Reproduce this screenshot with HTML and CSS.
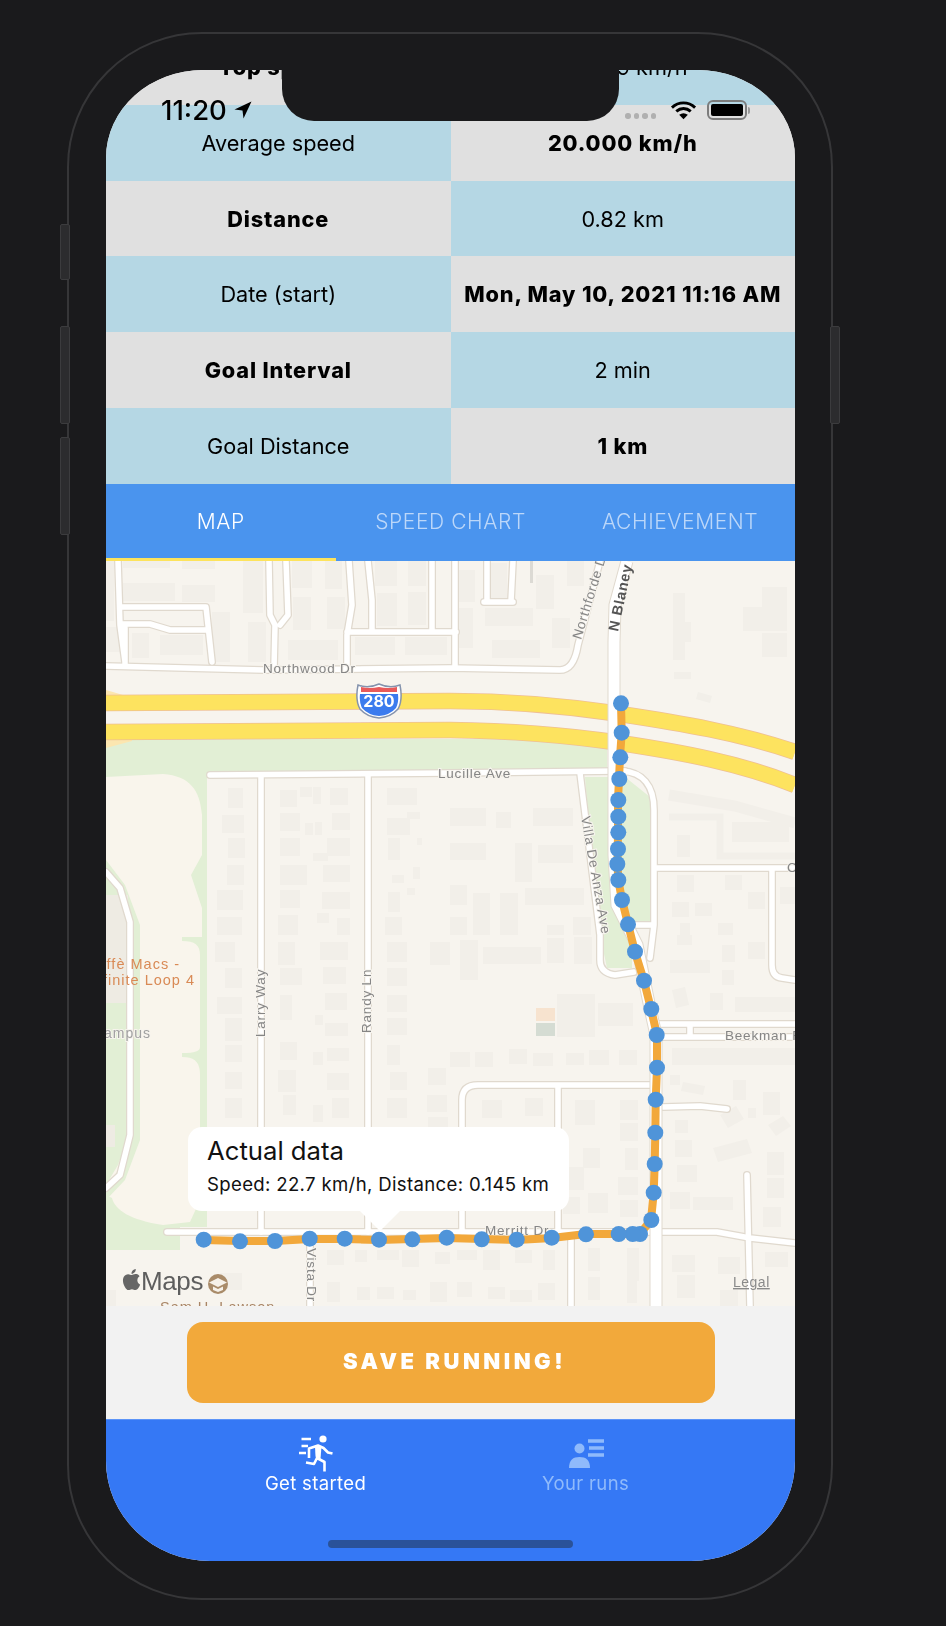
FILE: index.html
```html
<!DOCTYPE html>
<html lang="en">
<head>
<meta charset="utf-8">
<title>Run summary</title>
<link rel="stylesheet" href="styles.css">
</head>
<body>
<div class="phone">
  <span class="side side-a"></span>
  <span class="side side-b"></span>
  <span class="side side-c"></span>
  <span class="side side-r"></span>
  <div class="screen">
    <div class="stats">
      <div class="cell gray strong">Top speed</div><div class="cell blue">29.339 km/h</div>
      <div class="cell blue">Average speed</div><div class="cell gray strong">20.000 km/h</div>
      <div class="cell gray strong">Distance</div><div class="cell blue">0.82 km</div>
      <div class="cell blue">Date (start)</div><div class="cell gray strong">Mon, May 10, 2021 11:16 AM</div>
      <div class="cell gray strong">Goal Interval</div><div class="cell blue">2 min</div>
      <div class="cell blue">Goal Distance</div><div class="cell gray strong">1 km</div>
    </div>
    <div class="tabs">
      <div class="tab active">MAP</div>
      <div class="tab">SPEED CHART</div>
      <div class="tab">ACHIEVEMENT</div>
    </div>
    <div class="map">
      <svg class="map-svg" viewBox="106 561 689 745" xmlns="http://www.w3.org/2000/svg">
        <rect class="m-bg" x="106" y="561" width="689" height="745"/>
        <path class="m-green" d="M106 739H607V772H207V937H207V1053H207V1227H180V1250H106Z"/>
        <path class="m-cream" d="M106 777L163 774C190 776 200 790 202 815V855L191 875L202 908V937H182V941C195 941 200 945 200 955V1047C200 1051 195 1053 182 1053V1057C195 1057 200 1062 200 1075V1200L190 1222L163 1225C130 1220 115 1210 112 1198L106 1195V1185L133 1135V935L125 900L106 870Z"/>
        <path class="m-green" d="M106 860L125 885L140 925V1140L125 1180L106 1200V1190L118 1170L128 1135V935L120 900L106 880Z"/>
        <path class="m-build-dark" d="M106 895H128V1003H106Z"/>
        <path class="m-green" d="M106 1003H127V1135L118 1165L106 1185Z"/>
        <rect class="m-build-dark" x="106" y="1125" width="9" height="22"/>
        <path class="m-green" d="M585 777H625L650 797V921H632V968H607L600 935L590 840Z"/>
        <path class="m-ramp" d="M106 690L130 697V708H106ZM106 748V728H132V741Z"/>

        <path class="m-bld" d="M106 561h8v60h-8zM123 561h47v7h-47zM182 561h33v8h-33zM123 583h52v18h-52zM182 585h33v17h-33zM212 612h18v50h-18zM132 633h17v25h-17zM160 635h43v20h-43zM243 561h20v52h-20zM248 622h18v40h-18zM292 561h20v27h-20zM293 597h18v33h-18zM325 561h17v28h-17zM327 597h18v32h-18zM288 640h50v20h-50zM375 561h22v25h-22zM377 593h20v33h-20zM408 561h18v25h-18zM408 592h18v33h-18zM355 637h40v18h-40zM405 637h42v18h-42zM106 627h15v25h-15zM455 570h20v32h-20zM487 563h20v38h-20zM536 575h18v34h-18zM455 608h18v40h-18zM485 608h48v18h-48zM492 640h48v18h-48zM552 618h18v30h-18zM567 561h17v25h-17zM673 593h12v67h-12zM685 622h6v20h-6zM743 607h44v24h-44zM762 587h25v20h-25zM762 633h25v24h-25zM674 672h17v7h-17zM698 692l14 4-2 7-14-4z"/>
        <path class="m-bld" d="M450 808h36v18h-36zM496 812h15v16h-15zM533 808h40v18h-40zM450 843h36v17h-36zM515 843h17v39h-17zM538 845h35v18h-35zM450 885h17v20h-17zM473 893h17v42h-17zM500 893h18v42h-18zM525 888h59v17h-59zM450 917h17v18h-17zM547 925h17v10h-17zM573 917h18v18h-18zM677 835h13v22h-13zM732 822h57v20h-57zM677 875h17v17h-17zM725 875h17v15h-17zM672 902h17v15h-17zM695 903h17v13h-17zM748 892h17v17h-17zM780 887h15v17h-15zM680 923h10v12h-10zM718 923h15v12h-15z"/>
        <path class="m-bld" d="M228 788h15v20h-15zM222 815h22v18h-22zM228 838h17v20h-17zM227 865h17v20h-17zM217 890h26v20h-26zM217 917h25v18h-25zM215 942h20v20h-20zM225 968h17v20h-17zM217 997h25v17h-25zM225 1018h17v23h-17zM225 1045h17v17h-17zM225 1072h17v17h-17zM225 1098h17v20h-17zM280 790h17v17h-17zM300 787h12v10h-12zM313 787h8v17h-8zM330 788h18v17h-18zM280 813h20v18h-20zM305 823h8v12h-8zM315 822h7v13h-7zM332 813h18v17h-18zM280 838h20v18h-20zM327 838h23v18h-23zM313 853h15v8h-15zM280 865h27v20h-27zM323 865h27v17h-27zM280 890h20v18h-20zM322 892h28v17h-28zM278 915h20v20h-20zM317 913h12v10h-12zM337 918h13v17h-13zM278 942h17v23h-17zM323 967h23v17h-23zM280 968h22v17h-22zM280 995h12v25h-12zM325 993h22v17h-22zM315 1015h8v10h-8zM280 1042h17v18h-17zM325 1023h23v13h-23zM313 1052h10v13h-10zM327 1048h22v13h-22zM278 1070h18v22h-18zM327 1073h22v17h-22zM283 1095h13v20h-13zM332 1098h17v20h-17zM313 1105h10v17h-10zM320 942h28v18h-28z"/>
        <path class="m-bld" d="M387 788h30v17h-30zM407 812h13v7h-13zM387 818h23v17h-23zM388 838h12v22h-12zM417 838h5v7h-5zM392 875h12v8h-12zM413 867h7v12h-7zM407 888h8v7h-8zM388 892h12v20h-12zM385 917h17v18h-17zM387 942h20v20h-20zM387 968h20v18h-20zM387 995h20v17h-20zM387 1018h20v17h-20zM387 1045h13v20h-13zM390 1072h17v18h-17zM387 1098h20v20h-20zM430 942h20v23h-20zM428 1068h18v17h-18zM427 1095h20v17h-20zM428 1117h20v10h-20zM460 940h18v40h-18zM483 947h58v17h-58zM547 938h17v25h-17zM574 937h18v27h-18zM557 994h38v43h-38zM598 1003h35v23h-35zM450 1052h20v15h-20zM475 1052h18v15h-18zM509 1049h18v15h-18zM533 1053h20v13h-20zM566 1053h18v12h-18zM589 1050h20v15h-20zM619 1050h18v15h-18z"/>
        <path class="m-bld" d="M482 1100h20v18h-20zM525 1098h18v18h-18zM575 1100h20v25h-20zM620 1100h18v20h-18zM620 1123h18v18h-18zM583 1148h17v20h-17zM625 1148h13v22h-13zM618 1177h20v18h-20zM620 1200h18v17h-18zM588 1193h20v20h-20zM567 1167h17v23h-17zM563 1197h17v17h-17zM670 960h40v13h-40zM722 945h13v17h-13zM722 970h12v15h-12zM672 990l13-3 4 18-13 3zM710 993h13v17h-13zM735 997h60v15h-60zM748 942h17v17h-17zM677 935h15v10h-15zM672 1048h123v17h-123zM670 1075h10v10h-10zM683 1082l22 4-2 9-22-4zM733 1080h13v20h-13zM748 1108h8v10h-8zM720 1115l16-9 8 13-16 9zM763 1092h17v23h-17zM768 1125l15-9 8 10-15 10zM675 1120h13v13h-13zM675 1140h17v17h-17zM713 1148l34-9 5 14-34 9zM677 1165h20v17h-20zM670 1192h20v17h-20zM693 1197h40v13h-40zM767 1152h17v23h-17zM767 1178h17v20h-17zM763 1207h18v20h-18z"/>
        <path class="m-bld" d="M457 1250h20v10h-20zM483 1250h17v20h-17zM515 1250h17v13h-17zM543 1250h12v20h-12zM588 1248h12v23h-12zM627 1248h12v33h-12zM672 1255h23v17h-23zM718 1257h22v17h-22zM765 1252h23v15h-23zM457 1282h15v15h-15zM488 1287h17v12h-17zM510 1290h22v12h-22zM538 1283h17v17h-17zM588 1277h12v23h-12zM627 1273h10v30h-10zM677 1275h18v23h-18zM720 1290h18v16h-18zM327 1250h17v15h-17zM355 1250h12v12h-12zM377 1250h22v10h-22zM402 1250h17v17h-17zM435 1252h15v12h-15zM327 1282h13v20h-13zM357 1287h13v13h-13zM377 1287h17v12h-17zM403 1290h13v10h-13zM430 1282h17v20h-17zM220 1273h22v17h-22zM106 1290h10v16h-10z"/>
        <path class="m-bld-line" d="M669 795L735 806L795 823"/>
        <path class="m-bld-thin" d="M669 817H720V856H795"/>
        <rect class="m-soft-a" x="536" y="1008" width="19" height="13"/>
        <rect class="m-soft-b" x="536" y="1023" width="19" height="13"/>

        <path class="m-hw-c" d="M106 703L450 701C520 701 580 708 620 714C680 723 740 733 795 752"/>
        <path class="m-hw-c" d="M106 732L450 730C530 731 580 737 620 743C680 752 740 763 795 785"/>
        <path class="m-hw" d="M106 703L450 701C520 701 580 708 620 714C680 723 740 733 795 752"/>
        <path class="m-hw" d="M106 732L450 730C530 731 580 737 620 743C680 752 740 763 795 785"/>

        <g class="m-casing">
          <use href="#roads"/>
        </g>
        <g class="m-white">
          <g id="roads">
            <path d="M118 561L120 625L125 662M120 624H150L170 630H208M122 607H206L212 662M125 628V664"/>
            <path d="M106 666L263 670L450 668L560 670Q574 670 578 645L600 561"/>
            <path d="M269 561L270 615L275 625L274 668M286 561L288 615L280 625"/>
            <path d="M349 561L352 605L347 635V668M368 561L372 600V632M347 632H456M432 561V632M455 561V668"/>
            <path d="M487 561V601M513 561L511 601M484 602H513"/>
            <path d="M210 775L450 773L625 771"/>
            <path d="M261 775V1232M368 775V1232"/>
            <path d="M106 872L120 888L130 922V1135L120 1175L106 1188"/>
            <path d="M167 1232H657H717L750 1238L795 1243"/>
            <path d="M580 773L588 838L600 935V960Q600 973 615 975L634 972"/>
            <path d="M622 771C642 772 654 785 654 810V925L650 958M635 925H654"/>
            <path d="M657 868H795M772 868V965Q772 977 782 978L795 980"/>
            <path d="M657 1024H795M657 1037H795M690 1024V1037"/>
            <path d="M650 1085H478Q462 1085 462 1100V1232M558 1085V1232"/>
            <path d="M663 1107L700 1106L727 1109M747 1175L750 1306M571 1240V1306M310 1240V1306"/>
          </g>
        </g>
        <path class="r-main-c" d="M627 561L615 605L614 642V855L617 905L637 945L650 1008L656 1035V1306"/>
        <path class="r-main" d="M627 561L615 605L614 642V855L617 905L637 945L650 1008L656 1035V1306"/>
        <rect class="m-thin" x="530" y="561" width="3" height="22"/>

        <g class="m-shield">
          <path class="sh-out" d="M358 685Q368 689 379 684Q390 689 400 685Q403 700 398 709Q391 717 379 718Q367 717 360 709Q355 700 358 685Z"/>
          <path class="sh-blue" d="M360 694H398Q399 702 396 708Q390 715 379 716Q368 715 362 708Q359 702 360 694Z"/>
          <path class="sh-red" d="M361 687Q370 689 379 687Q388 689 397 687V692H361Z"/>
          <text class="sh-text" x="379" y="707">280</text>
        </g>

        <g class="m-labels">
          <text x="263" y="673">Northwood Dr</text>
          <text x="438" y="778">Lucille Ave</text>
          <text transform="translate(581 640) rotate(-73)">Northforde Dr</text>
          <text class="lbl-strong" transform="translate(618 632) rotate(-78)">N Blaney</text>
          <text transform="translate(581 817) rotate(80)">Villa De Anza Ave</text>
          <text transform="translate(265 1037) rotate(-90)">Larry Way</text>
          <text transform="translate(371 1033) rotate(-90)">Randy Ln</text>
          <text transform="translate(307 1248) rotate(90)">Vista Dr</text>
          <text x="485" y="1235">Merritt Dr</text>
          <text x="725" y="1040">Beekman Rd</text>
          <text x="787" y="872">Cupertino</text>
          <text class="lbl-anchor-end" x="151" y="1038">Campus</text>
          <text class="lbl-ring" x="103" y="875">Loop</text>
          <text class="lbl-poi" x="180" y="969">Caffè Macs -</text>
          <text class="lbl-poi" x="195" y="985">Infinite Loop 4</text>
          <text class="lbl-school" x="160" y="1312">Sam H. Lawson</text>
        </g>

        <path class="route" d="M621 703L621.700 733L620 757L619 779L618 800V832L617.500 864L618.300 880L622 900L628 924L635 952L644 981L651 1009L657 1035V1068L655.700 1100L655.300 1133L654.700 1164L653.700 1193L651 1220L640 1234H619L586 1234L552 1238L517 1240L482 1239L447 1238L412 1239L379 1240L345 1239L310 1239L275 1241L240 1241L204 1240"/>
        <g class="dots">
          <circle cx="621" cy="703.3" r="8"/><circle cx="621.7" cy="732.7" r="8"/><circle cx="620.3" cy="757.3" r="8"/><circle cx="619.3" cy="779" r="8"/><circle cx="618.3" cy="800" r="8"/><circle cx="618.3" cy="816.7" r="8"/><circle cx="618.3" cy="832.3" r="8"/><circle cx="618" cy="849" r="8"/><circle cx="617.3" cy="864" r="8"/><circle cx="618.3" cy="880" r="8"/><circle cx="622" cy="900" r="8"/><circle cx="628" cy="924.3" r="8"/><circle cx="635" cy="951.7" r="8"/><circle cx="644" cy="980.7" r="8"/><circle cx="651.3" cy="1009" r="8"/><circle cx="656.7" cy="1035" r="8"/><circle cx="657" cy="1067.7" r="8"/><circle cx="655.7" cy="1099.7" r="8"/><circle cx="655.3" cy="1132.7" r="8"/><circle cx="654.7" cy="1164" r="8"/><circle cx="653.7" cy="1192.7" r="8"/><circle cx="651.3" cy="1220" r="8"/><circle cx="640" cy="1234" r="8"/><circle cx="632.7" cy="1234" r="8"/><circle cx="618.7" cy="1234" r="8"/><circle cx="586" cy="1234.3" r="8"/><circle cx="551.7" cy="1237.7" r="8"/><circle cx="516.7" cy="1239.7" r="8"/><circle cx="481.7" cy="1239.3" r="8"/><circle cx="446.7" cy="1237.7" r="8"/><circle cx="412.3" cy="1239.3" r="8"/><circle cx="379" cy="1239.7" r="8"/><circle cx="344.7" cy="1238.7" r="8"/><circle cx="309.7" cy="1238.7" r="8"/><circle cx="275" cy="1241" r="8"/><circle cx="240" cy="1241.3" r="8"/><circle cx="203.7" cy="1239.7" r="8"/>
        </g>

        <g transform="translate(121 1269) scale(.88)">
          <path class="apple" d="M12.152 6.896c-.948 0-2.415-1.078-3.96-1.04-2.04.027-3.91 1.183-4.961 3.014-2.117 3.675-.546 9.103 1.519 12.09 1.013 1.454 2.208 3.09 3.792 3.039 1.52-.065 2.09-.987 3.935-.987 1.831 0 2.35.987 3.96.948 1.637-.026 2.676-1.48 3.676-2.948 1.156-1.688 1.636-3.325 1.662-3.415-.039-.013-3.182-1.221-3.22-4.857-.026-3.04 2.48-4.494 2.597-4.559-1.429-2.09-3.623-2.324-4.39-2.376-2-.156-3.675 1.09-4.61 1.09zM15.53 3.830c.843-1.012 1.4-2.427 1.245-3.830-1.207.052-2.662.805-3.532 1.818-.78.896-1.454 2.338-1.273 3.714 1.338.104 2.715-.688 3.559-1.701"/>
        </g>
        <text class="maps-word" x="141" y="1290">Maps</text>
        <circle class="badge" cx="218" cy="1284" r="10"/>
        <path class="badge-cap" d="M218 1278L227 1282.500L218 1287L209 1282.500ZM213 1286.500L218 1289L223 1286.500V1290L218 1292L213 1290Z"/>
        <text class="legal" x="733" y="1287">Legal</text>
      </svg>
      <div class="callout">
        <div class="callout-title">Actual data</div>
        <div class="callout-text">Speed: 22.7 km/h, Distance: 0.145 km</div>
      </div>
    </div>
    <div class="action">
      <div class="save">SAVE RUNNING!</div>
    </div>
    <nav class="tabbar">
      <div class="nav-item">
        <svg class="nav-icon" viewBox="0 0 36 38" xmlns="http://www.w3.org/2000/svg">
          <circle class="run-head" cx="25" cy="4" r="3.600"/>
          <path class="run-lines" d="M3.500 4H13M3.500 11H10M1 18H8"/>
          <path class="run-body" d="M11 23V13.500L20 10.500L25.500 13L30 17.500L34.500 18.500M20.500 11L19 23L26.500 27V36.500M19 23L16 29L8 27.500"/>
          <path class="run-torso" d="M17 11.500L23.500 11L22.500 24L17.500 21.500Z"/>
        </svg>
        <span>Get started</span>
      </div>
      <div class="nav-item dim">
        <svg class="nav-icon" viewBox="0 0 36 38" xmlns="http://www.w3.org/2000/svg">
          <circle class="runs-head" cx="11.500" cy="13.500" r="5"/>
          <path class="runs-body" d="M1 33C1 25 5 22 11.500 22C18 22 22 25 22 33Z"/>
          <path class="runs-lines" d="M20 6H36M21 13H36M20 20H36"/>
        </svg>
        <span>Your runs</span>
      </div>
      <div class="home-bar"></div>
    </nav>
    <div class="notch"></div>
    <div class="status">
      <div class="status-left">
        <span class="clock">11:20</span>
        <svg class="loc" viewBox="0 0 18 18" xmlns="http://www.w3.org/2000/svg"><path d="M17.500 0.500L0.500 8.500L8.500 9.500L9.500 17.500Z"/></svg>
      </div>
      <div class="status-right">
        <div class="signal"><i></i><i></i><i></i><i></i></div>
        <svg class="wifi" viewBox="0 0 28 20" xmlns="http://www.w3.org/2000/svg">
          <path class="wifi-arc" d="M2 7.500C9 1 19 1 26 7.500M6.500 11.500C11 7.500 17 7.500 21.500 11.500"/>
          <path class="wifi-dot" d="M14 19.500L9.500 15Q14 11.500 18.500 15Z"/>
        </svg>
        <div class="battery"><div class="battery-fill"></div></div>
        <span class="battery-cap"></span>
      </div>
    </div>
  </div>
</div>
</body>
</html>
```

FILE: styles.css
```css
* { box-sizing: border-box; }
html, body { margin: 0; padding: 0; }
body {
  width: 946px;
  height: 1626px;
  background: #1a1a1c;
  overflow: hidden;
  font-family: Inter, "Liberation Sans", sans-serif;
}
.phone {
  position: relative;
  width: 766px;
  height: 1568px;
  margin: 32px 0 0 67px;
  padding: 36px 0 0 37px;
  border: 2px solid #363638;
  border-radius: 135px;
}
.side {
  position: absolute;
  width: 10px;
  background: #2c2c2e;
  border: 1px solid #3c3c3e;
  border-radius: 2px;
}
.side-a { left: -9px; top: 190px; height: 56px; }
.side-b { left: -9px; top: 292px; height: 98px; }
.side-c { left: -9px; top: 403px; height: 98px; }
.side-r { right: -9px; top: 292px; height: 98px; }

.screen {
  position: relative;
  width: 689px;
  height: 1491px;
  border-radius: 97px 97px 104px 104px / 88px 88px 100px 100px;
  overflow: hidden;
  background: #f2f2f2;
  filter: blur(.35px);
}
.stats {
  display: grid;
  grid-template-columns: 344.500px 344.500px;
  grid-auto-rows: 75.830px;
  margin-top: -41px;
  font-size: 21.700px;
  color: #000;
}
.cell { display: flex; align-items: center; justify-content: center; white-space: nowrap; }
.blue { background: #b5d7e4; }
.gray { background: #e0e0e0; }
.strong { font-weight: 800; letter-spacing: .85px; }

.tabs {
  display: grid;
  grid-template-columns: repeat(3, 1fr);
  height: 77px;
  background: #4a94ee;
  font-size: 21px;
  font-weight: 300;
  letter-spacing: .6px;
  color: #bcd7f9;
}
.tab { display: flex; align-items: center; justify-content: center; padding-top: 2px; border-bottom: 3px solid transparent; }
.tab.active { color: #fff; border-bottom-color: #fde35c; }

.map { position: relative; height: 745px; background: #f7f4ee; }
.map-svg { display: block; width: 689px; height: 745px; filter: blur(.4px); }
.m-bg { fill: #f7f4ee; }
.m-green { fill: #e2efd5; }
.m-cream { fill: #f9f5ec; }
.m-ramp { fill: #fce6b0; }
.m-bld { fill: #f2efe9; }
.m-build-dark { fill: #eeebe3; }
.m-bld-line { fill: none; stroke: #f2efe9; stroke-width: 11; }
.m-bld-thin { fill: none; stroke: #f2efe9; stroke-width: 7; }
.m-soft-a { fill: #f7e3cf; }
.m-soft-b { fill: #d5dcd3; }
.m-hw-c { fill: none; stroke: #efbf93; stroke-width: 16.500; }
.m-hw { fill: none; stroke: #fde35f; stroke-width: 15; }
.m-casing path, .m-white path { fill: none; stroke-linecap: round; stroke-linejoin: round; }
.m-casing { stroke: #e0d9ce; stroke-width: 8; }
.m-white { stroke: #fff; stroke-width: 5.500; }
.r-main-c { fill: none; stroke: #e0d9ce; stroke-width: 13; }
.r-main { fill: none; stroke: #fff; stroke-width: 11; }
.m-thin { fill: #dcdad4; }
.sh-out { fill: #fff; stroke: #8593ad; stroke-width: 1.500; }
.sh-blue { fill: #3b7bee; }
.sh-red { fill: #e85a5a; }
.sh-text { fill: #fff; font: 700 16px Inter, sans-serif; text-anchor: middle; }
.m-labels text {
  font: 400 13.500px "Liberation Sans", sans-serif;
  letter-spacing: .8px;
  fill: #858585;
  stroke: #f7f4ee;
  stroke-width: 2px;
  paint-order: stroke;
}
.m-labels .lbl-strong { font-weight: 700; font-size: 14.500px; fill: #555; stroke: none; }
.m-labels .lbl-anchor-end { text-anchor: end; font-size: 14px; letter-spacing: 1px; fill: #a0a0a0; }
.m-labels .lbl-ring { text-anchor: end; font-size: 14px; }
.m-labels .lbl-poi { text-anchor: end; font-size: 14.500px; letter-spacing: 1px; fill: #d98a55; stroke: none; }
.m-labels .lbl-school { font-size: 14.500px; letter-spacing: 1px; fill: #a98566; stroke: none; }
.route { fill: none; stroke: #f2a83b; stroke-width: 8; stroke-linejoin: round; }
.dots circle { fill: #4f94d9; }
.apple { fill: #666; }
.maps-word { font: 400 26px "Liberation Sans", sans-serif; fill: #5e5e5e; letter-spacing: -.4px; }
.badge { fill: #a98b69; }
.badge-cap { fill: #f6f1e9; }
.legal { font: 400 14px "Liberation Sans", sans-serif; letter-spacing: .5px; fill: #8a8a8a; text-decoration: underline; }

.callout {
  position: absolute;
  left: 82px;
  top: 566px;
  width: 381px;
  height: 84px;
  padding: 9px 19px 0;
  background: #fff;
  border-radius: 14px;
  white-space: nowrap;
  color: #111;
}
.callout::after {
  content: "";
  position: absolute;
  left: 172px;
  top: 84px;
  border-left: 20px solid transparent;
  border-right: 20px solid transparent;
  border-top: 20px solid #fff;
}
.callout-title { font-size: 25.700px; line-height: 30px; }
.callout-text { font-size: 18.600px; line-height: 22px; margin-top: 7px; letter-spacing: .33px; }

.action {
  display: flex;
  justify-content: center;
  height: 113px;
  padding-top: 16px;
  background: #f2f2f2;
}
.save {
  display: flex;
  align-items: center;
  justify-content: center;
  width: 528px;
  height: 81px;
  padding: 0 0 3px 8px;
  border-radius: 16px;
  background: #f2a93b;
  color: #fff;
  font-size: 22px;
  font-weight: 900;
  letter-spacing: 3.500px;
}
.tabbar {
  position: relative;
  display: grid;
  grid-template-columns: 270px 270px;
  justify-content: center;
  height: 142px;
  padding-top: 15px;
  background: #3578f5;
  border-top: 1px solid #5c94f7;
  color: #fff;
  font-size: 18.500px;
  letter-spacing: .35px;
}
.nav-item { display: flex; flex-direction: column; align-items: center; }
.nav-item span { margin-top: -1px; line-height: 22px; }
.nav-item.dim { color: #8fbafb; }
.nav-icon { display: block; width: 36px; height: 38px; }
.run-head { fill: #fff; }
.run-lines { fill: none; stroke: #fff; stroke-width: 2.400; }
.run-body { fill: none; stroke: #fff; stroke-width: 2.600; stroke-linejoin: round; }
.run-torso { fill: #fff; }
.runs-head, .runs-body { fill: #8fbafb; }
.runs-lines { fill: none; stroke: #8fbafb; stroke-width: 3.600; }
.home-bar {
  position: absolute;
  left: 222px;
  top: 120px;
  width: 245px;
  height: 8px;
  border-radius: 4px;
  background: #2a5299;
}

.notch {
  position: absolute;
  left: 176px;
  top: 0;
  width: 337px;
  height: 51px;
  background: #1a1a1c;
  border-radius: 0 0 32px 32px;
}
.status {
  position: absolute;
  left: 55px;
  top: 26px;
  right: 45px;
  display: flex;
  justify-content: space-between;
  align-items: center;
  height: 28px;
  color: #000;
}
.status-left { display: flex; align-items: center; gap: 7px; }
.clock { font-size: 27.500px; font-weight: 500; line-height: 28px; }
.loc { display: block; width: 18px; height: 18px; fill: #000; }
.status-right { display: flex; align-items: center; position: relative; }
.signal { display: flex; gap: 3px; margin-right: 14px; padding-top: 12px; }
.signal i { display: block; width: 5.500px; height: 5.500px; border-radius: 50%; background: #b0b0b0; }
.wifi { display: block; width: 27px; height: 20px; margin-right: 10px; }
.wifi-arc { fill: none; stroke: #000; stroke-width: 3; }
.wifi-dot { fill: #000; }
.battery { width: 40px; height: 20px; padding: 2px; border: 2px solid #7c7c7c; border-radius: 6px; }
.battery-fill { width: 100%; height: 100%; background: #000; border-radius: 2px; }
.battery-cap { width: 2px; height: 7px; margin-left: 1px; background: #999; border-radius: 0 2px 2px 0; }
```
